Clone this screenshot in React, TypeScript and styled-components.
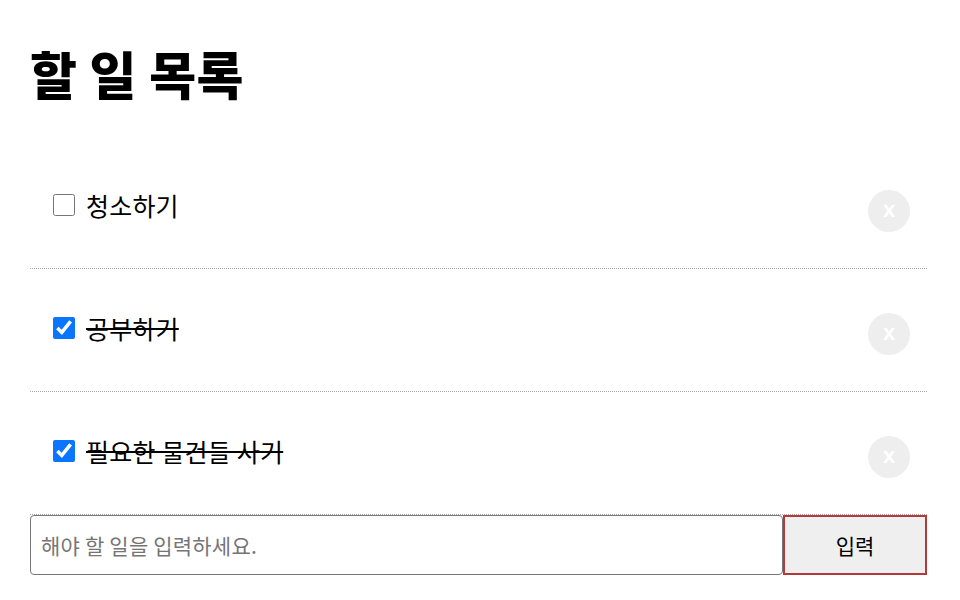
import React, { useState } from "react";
import styled, { createGlobalStyle } from "styled-components";

const GlobalStyle = createGlobalStyle`
  body {
    margin: 0;
    font-family: "Noto Sans CJK KR", "Noto Sans", sans-serif;
    background: #fff;
    color: #000;
  }
`;

const Page = styled.div`
  padding: 44px 33px 0 30px;
`;

const Title = styled.h1`
  margin: 0 0 43px;
  font-size: 51px;
  line-height: 59px;
  font-weight: 800;
  letter-spacing: 0.5px;
`;

const List = styled.ul`
  list-style: none;
  margin: 0;
  padding: 0;
`;

const Item = styled.li`
  display: flex;
  align-items: center;
  height: 122px;
  padding: 0 17px 0 22px;
  border-bottom: 1px dotted #aaa;
`;

const Check = styled.input`
  width: 22px;
  height: 22px;
  margin: 0 11px 4px 1px;
  accent-color: #0a75ff;
`;

const Label = styled.span<{ $done: boolean }>`
  flex: 1;
  margin-bottom: 5px;
  font-size: 25px;
  font-weight: 400;
  letter-spacing: 0.2px;
  text-decoration: ${(p) => (p.$done ? "line-through" : "none")};
`;

const Remove = styled.button`
  width: 42px;
  height: 42px;
  margin-top: 8px;
  padding: 0 0 2px;
  border: none;
  border-radius: 50%;
  background: #eee;
  color: #fff;
  font-family: "Liberation Sans", sans-serif;
  font-size: 22px;
  font-weight: 700;
  cursor: pointer;
`;

const Form = styled.form`
  display: flex;
  height: 60px;
`;

const Field = styled.input`
  flex: 1;
  box-sizing: border-box;
  height: 60px;
  padding: 0 10px;
  border: 1px solid #777;
  border-radius: 4px;
  font-family: inherit;
  font-size: 21px;
  letter-spacing: 0.2px;
  &::placeholder {
    color: #757575;
  }
`;

const Submit = styled.button`
  width: 144px;
  box-sizing: border-box;
  border: 2px solid #b23a3a;
  background: #efefef;
  font-family: inherit;
  font-size: 21px;
  color: #000;
`;

const initial = [
  { id: 1, text: "청소하기", done: false },
  { id: 2, text: "공부하기", done: true },
  { id: 3, text: "필요한 물건들 사기", done: true },
];

export default function App() {
  const [todos, setTodos] = useState(initial);
  const [text, setText] = useState("");

  const toggle = (id: number) =>
    setTodos((prev) => prev.map((t) => (t.id === id ? { ...t, done: !t.done } : t)));

  return (
    <Page>
      <GlobalStyle />
      <Title>할 일 목록</Title>
      <List>
        {todos.map((t) => (
          <Item key={t.id}>
            <Check type="checkbox" checked={t.done} onChange={() => toggle(t.id)} />
            <Label $done={t.done}>{t.text}</Label>
            <Remove onClick={() => setTodos((prev) => prev.filter((x) => x.id !== t.id))}>x</Remove>
          </Item>
        ))}
      </List>
      <Form
        onSubmit={(e) => {
          e.preventDefault();
          if (!text.trim()) return;
          setTodos((prev) => [...prev, { id: Date.now(), text, done: false }]);
          setText("");
        }}
      >
        <Field placeholder="해야 할 일을 입력하세요." value={text} onChange={(e) => setText(e.target.value)} />
        <Submit type="submit">입력</Submit>
      </Form>
    </Page>
  );
}
